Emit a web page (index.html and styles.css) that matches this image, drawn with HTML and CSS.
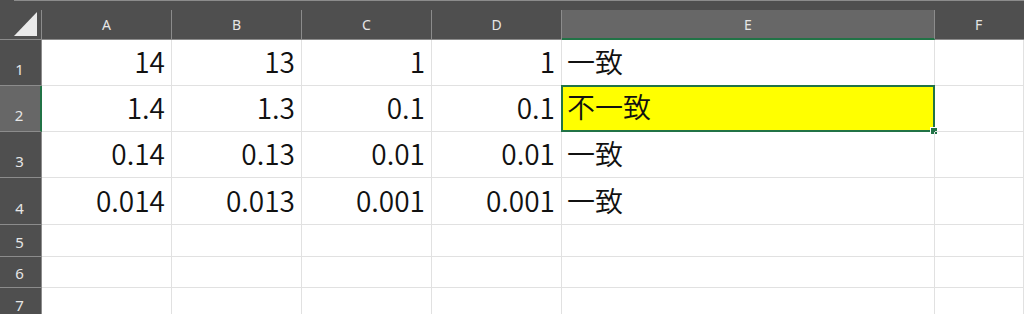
FILE: index.html
```html
<!DOCTYPE html>
<html lang="ja">
<head>
    <meta charset="UTF-8">
    <title>Sheet1</title>
    <link rel="stylesheet" href="styles.css">
</head>
<body>
<div class="topbar"><span class="topline"></span></div>
<div class="sheet">
    <div class="corner"><span class="tri"></span></div>
    <div class="colhead">A</div>
    <div class="colhead">B</div>
    <div class="colhead">C</div>
    <div class="colhead">D</div>
    <div class="colhead sel">E</div>
    <div class="colhead last">F</div>

    <div class="rowhead tall">1</div>
    <div class="cell num">14</div>
    <div class="cell num">13</div>
    <div class="cell num">1</div>
    <div class="cell num">1</div>
    <div class="cell txt">一致</div>
    <div class="cell"></div>

    <div class="rowhead tall sel">2</div>
    <div class="cell num">1.4</div>
    <div class="cell num">1.3</div>
    <div class="cell num">0.1</div>
    <div class="cell num">0.1</div>
    <div class="cell txt active">不一致<span class="handle"></span></div>
    <div class="cell"></div>

    <div class="rowhead tall">3</div>
    <div class="cell num">0.14</div>
    <div class="cell num">0.13</div>
    <div class="cell num">0.01</div>
    <div class="cell num">0.01</div>
    <div class="cell txt">一致</div>
    <div class="cell"></div>

    <div class="rowhead tall">4</div>
    <div class="cell num">0.014</div>
    <div class="cell num">0.013</div>
    <div class="cell num">0.001</div>
    <div class="cell num">0.001</div>
    <div class="cell txt">一致</div>
    <div class="cell"></div>

    <div class="rowhead">5</div>
    <div class="cell"></div>
    <div class="cell"></div>
    <div class="cell"></div>
    <div class="cell"></div>
    <div class="cell"></div>
    <div class="cell"></div>

    <div class="rowhead">6</div>
    <div class="cell"></div>
    <div class="cell"></div>
    <div class="cell"></div>
    <div class="cell"></div>
    <div class="cell"></div>
    <div class="cell"></div>

    <div class="rowhead">7</div>
    <div class="cell"></div>
    <div class="cell"></div>
    <div class="cell"></div>
    <div class="cell"></div>
    <div class="cell"></div>
    <div class="cell"></div>
</div>
</body>
</html>
```

FILE: styles.css
```css
body {
    margin: 0;
    padding: 0;
    background: #ffffff;
    overflow: hidden;
    font-family: "Noto Sans CJK JP", "Noto Sans", sans-serif;
}

.topbar {
    height: 10px;
    background: #4f4f4f;
    padding-left: 14px;
}

.topline {
    display: block;
    height: 1px;
    background: #8c8c8c;
}

.sheet {
    display: grid;
    grid-template-columns: 42px 130px 130px 130px 130px 373px 1fr;
    grid-template-rows: 30px 46px 46px 46px 47px 32px 31px 32px;
}

.corner {
    background: #4f4f4f;
    border-right: 1px solid #8c8c8c;
    border-bottom: 1px solid #8c8c8c;
    display: flex;
    align-items: flex-end;
    justify-content: flex-end;
    padding: 0 4px 3px 0;
}

.tri {
    width: 23px;
    height: 24px;
    background: #eaeaea;
    clip-path: polygon(100% 0, 100% 100%, 0 100%);
}

.colhead {
    background: #4f4f4f;
    color: #e6e6e6;
    font-family: "Noto Sans", sans-serif;
    font-size: 14px;
    border-right: 1px solid #8c8c8c;
    border-bottom: 1px solid #8c8c8c;
    display: flex;
    align-items: center;
    justify-content: center;
}

.colhead.sel {
    background: #676767;
    border-bottom: 2px solid #217346;
}

.colhead.last {
    border-right: none;
    justify-content: flex-start;
    padding-left: 40px;
}

.rowhead {
    background: #4f4f4f;
    color: #e6e6e6;
    font-family: "Noto Sans", sans-serif;
    font-size: 15px;
    border-right: 1px solid #8c8c8c;
    border-bottom: 1px solid #8c8c8c;
    display: flex;
    align-items: flex-end;
    justify-content: center;
    padding-bottom: 4px;
    padding-right: 2px;
}

.rowhead.tall {
    padding-bottom: 6px;
}

.rowhead.sel {
    background: #676767;
    border-right: 2px solid #217346;
}

.cell {
    border-right: 1px solid #e1e1e1;
    border-bottom: 1px solid #e1e1e1;
    font-size: 28px;
    font-weight: 350;
    color: #111111;
    display: flex;
    align-items: flex-end;
    line-height: 1;
    padding-bottom: 10px;
    position: relative;
}

.cell.num {
    justify-content: flex-end;
    padding-right: 6px;
}

.cell.txt {
    padding-left: 5px;
}

.cell.active {
    background: #ffff00;
    border: 2px solid #217346;
    margin: -1px 0 0 -1px;
    padding-left: 4px;
}

.handle {
    position: absolute;
    right: -5px;
    bottom: -5px;
    width: 6px;
    height: 6px;
    background: #217346;
    border: 1px solid #ffffff;
}
```
